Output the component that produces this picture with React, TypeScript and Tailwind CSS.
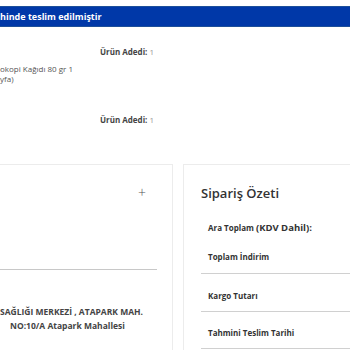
import React from "react";

const font = { fontFamily: '"Open Sans", "Noto Sans", sans-serif' };

function Adet() {
  return (
    <div className="pl-[100px] text-[8px] leading-[12px]">
      <span className="font-bold text-[#444]">Ürün Adedi:</span>{" "}
      <span className="text-[#999]">1</span>
    </div>
  );
}

export default function App() {
  return (
    <div className="w-[350px] h-[350px] overflow-hidden bg-white" style={font}>
      <div className="pt-[6px]">
        <div className="h-[21px] bg-[#0038a8] border-y border-[#1d4f9a] flex items-center">
          <span className="text-[9px] font-bold text-white">hinde teslim edilmiştir</span>
        </div>
      </div>

      <div className="mt-[19px]">
        <Adet />
        <div className="mt-[6px] text-[8px] leading-[10px] text-[#555] w-[100px]">
          okopi Kağıdı 80 gr 1
          <br />
          yfa)
        </div>
        <div className="mt-[30px]">
          <Adet />
        </div>
      </div>

      <div className="mt-[38px] flex gap-[10px]">
        <div className="w-[173px] h-[200px] border-t border-r border-[#ececec]">
          <div className="flex justify-end pr-[26px] pt-[21px]">
            <span className="text-[14px] leading-[14px] text-[#555] font-light">+</span>
          </div>
          <div className="mt-[69px] mr-[15px] border-b border-[#c8c8c8]" />
          <div className="mt-[35px] text-[8.5px] leading-[14px] font-bold text-[#444]">
            <div>SAĞLIĞI MERKEZİ , ATAPARK MAH.</div>
            <div className="pl-[10px]">NO:10/A Atapark Mahallesi</div>
          </div>
        </div>
        <div className="flex-1 h-[200px] border-t border-l border-[#ececec] pl-[17px]">
          <div className="pt-[18px] text-[13px] leading-[20px] font-semibold text-[#333]">
            Sipariş Özeti
          </div>
          <div className="text-[8px] leading-[12px] font-bold text-[#333]">
            <div className="mt-[19px] pl-[7px]">
              Ara Toplam <span className="text-[9.5px]">(KDV Dahil):</span>
            </div>
            <div className="mt-[17px] pb-[10px] pl-[7px] border-b border-[#d0d0d0]">Toplam İndirim</div>
            <div className="pt-[16px] pb-[9px] pl-[7px] border-b border-[#d0d0d0]">Kargo Tutarı</div>
            <div className="pt-[15px] pb-[9px] pl-[7px] border-b border-[#d0d0d0]">Tahmini Teslim Tarihi</div>
          </div>
        </div>
      </div>
    </div>
  );
}
